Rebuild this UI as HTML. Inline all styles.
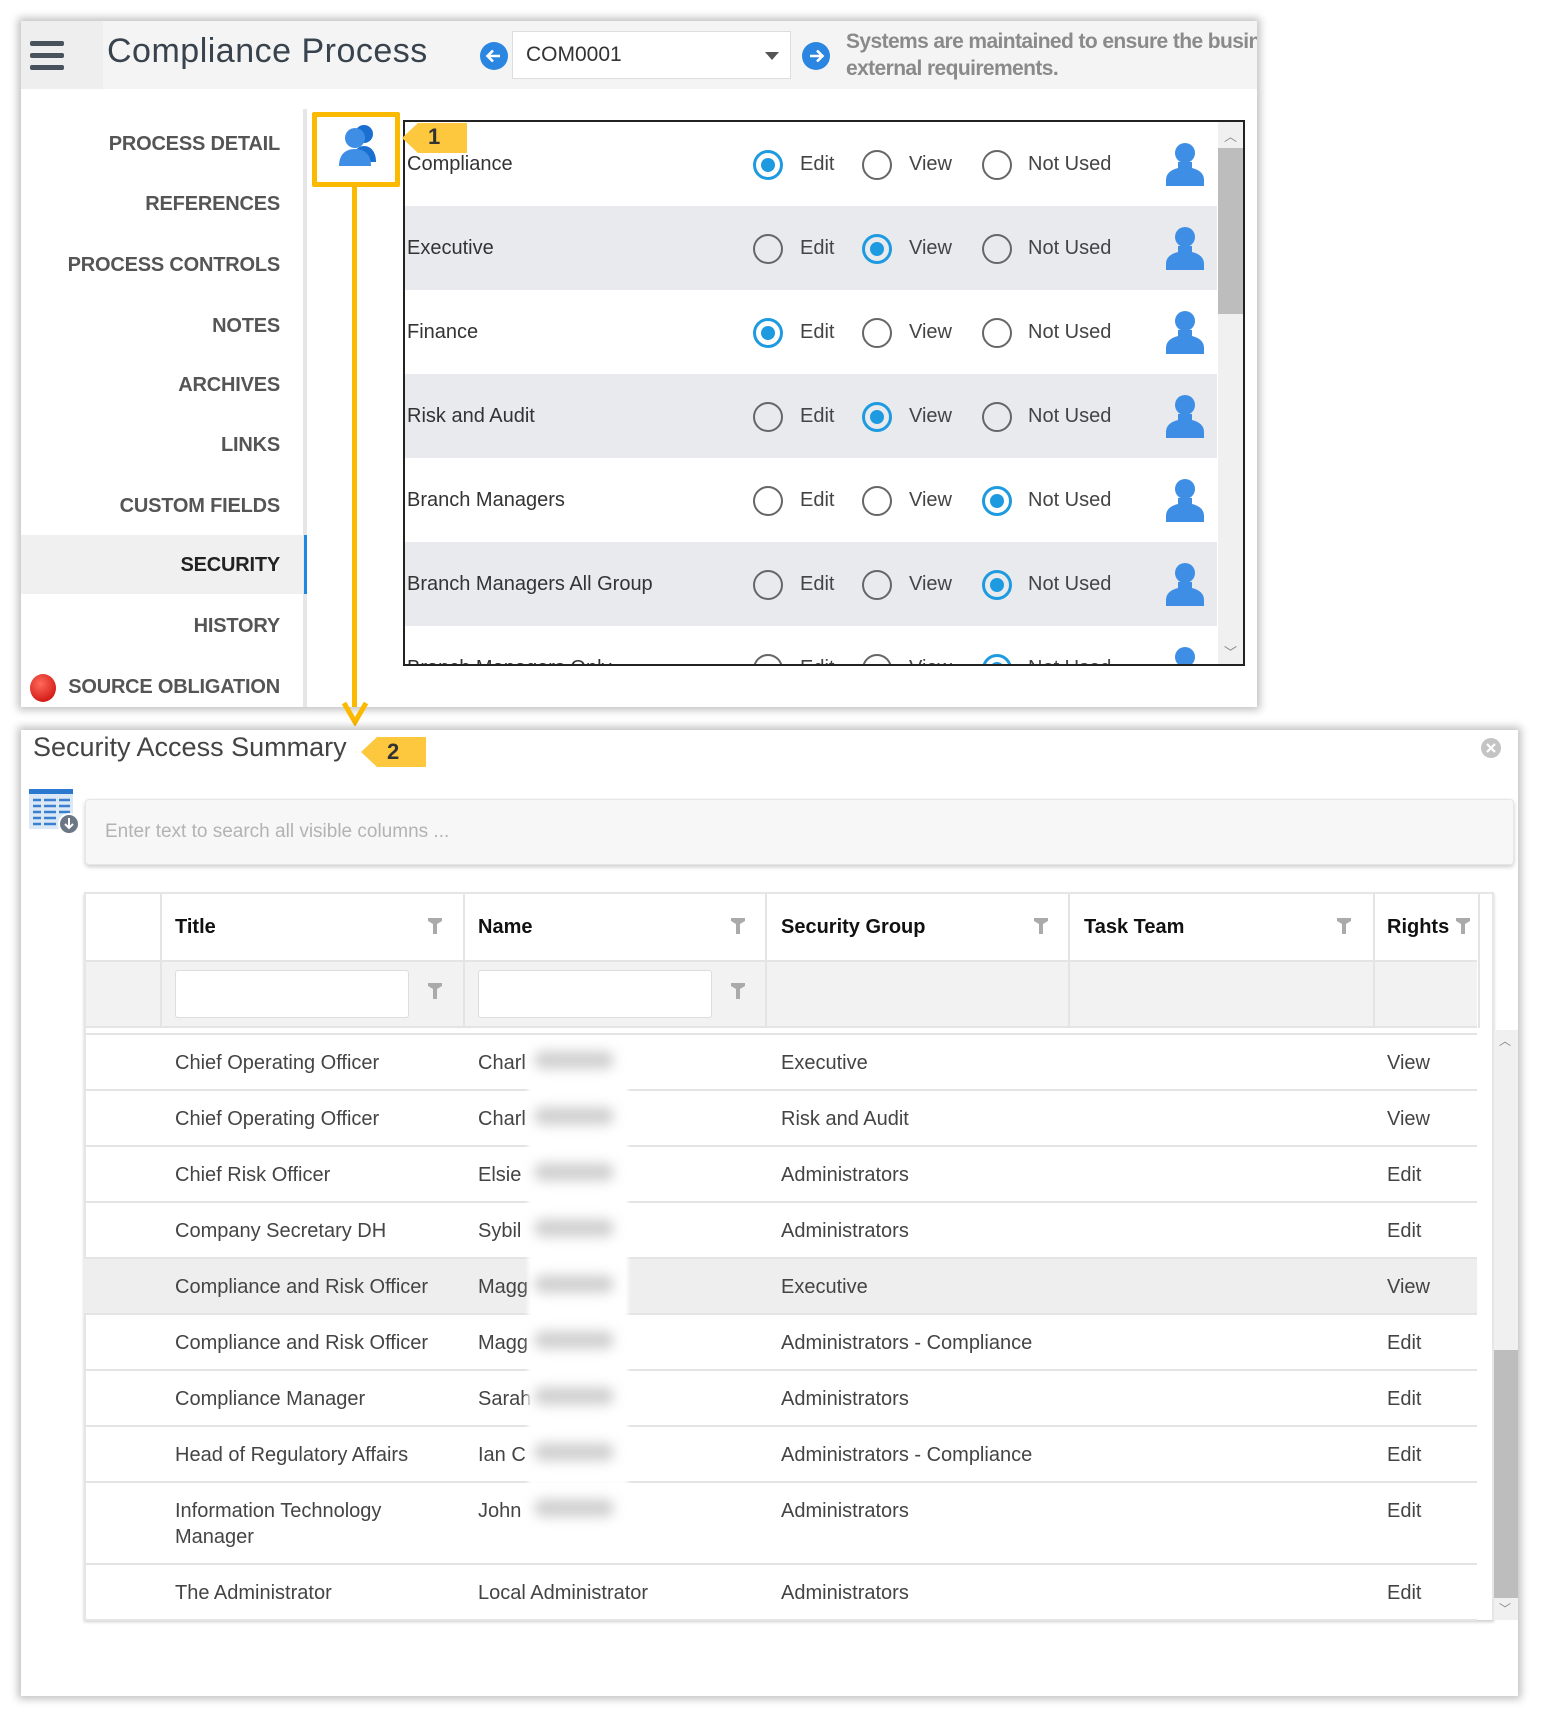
<!DOCTYPE html>
<html><head><meta charset="utf-8"><style>
*{box-sizing:border-box;margin:0;padding:0}
body{width:1542px;height:1720px;background:#fff;position:relative;overflow:hidden;font-family:"Liberation Sans",sans-serif;color:#444}
.abs{position:absolute}
.panel1{left:21px;top:21px;width:1236px;height:686px;background:#fff;box-shadow:0 0 8px 3px rgba(0,0,0,.25)}
.panel2{left:21px;top:730px;width:1497px;height:966px;background:#fff;box-shadow:0 0 8px 3px rgba(0,0,0,.25)}
.nav{position:absolute;right:0;width:290px;text-align:right;font-size:20px;color:#555;font-weight:bold;letter-spacing:-.2px}
.row{position:absolute;left:406px;width:812px;height:84px}
.rl{position:absolute;left:2px;top:31px;font-size:20px;color:#333}
.rad{position:absolute;width:30px;height:30px;border-radius:50%;border:2px solid #666;top:27px}
.rad.on{border:3px solid #1e9be0}
.rad.on::after{content:"";position:absolute;left:5px;top:5px;width:14px;height:14px;border-radius:50%;background:#1e9be0}
.lab{position:absolute;top:31px;font-size:20px;color:#444}
.cell{position:absolute;font-size:20px;color:#444}
.fil{position:absolute;width:14px;height:16px}
.gr{position:absolute;left:84px;width:1393px;height:56px;border-bottom:2px solid #e4e4e4}
</style></head><body>

<div class="abs panel1">
  <div class="abs" style="left:0;top:0;width:1236px;height:68px;background:#f4f4f4"></div>
  <div class="abs" style="left:0;top:0;width:82px;height:68px;background:#eeeeee"></div>
  <div class="abs" style="left:9px;top:20px;width:34px;height:5px;background:#48525c;border-radius:2px"></div>
  <div class="abs" style="left:9px;top:32px;width:34px;height:5px;background:#48525c;border-radius:2px"></div>
  <div class="abs" style="left:9px;top:44px;width:34px;height:5px;background:#48525c;border-radius:2px"></div>
  <div class="abs" style="left:86px;top:11px;font-size:34px;color:#38434e;letter-spacing:.5px">Compliance Process</div>
  <svg class="abs" style="left:458px;top:20px" width="30" height="30" viewBox="0 0 30 30"><circle cx="15" cy="15" r="14" fill="#2a86e0"/><path d="M21 15H9M14 9.5L8.5 15 14 20.5" stroke="#fff" stroke-width="2.6" fill="none"/></svg>
  <div class="abs" style="left:491px;top:10px;width:279px;height:48px;background:#fff;border:1px solid #ddd"></div>
  <div class="abs" style="left:505px;top:22px;font-size:21px;color:#333">COM0001</div>
  <div class="abs" style="left:744px;top:31px;border-left:7px solid transparent;border-right:7px solid transparent;border-top:8px solid #555"></div>
  <svg class="abs" style="left:780px;top:20px" width="30" height="30" viewBox="0 0 30 30"><circle cx="15" cy="15" r="14" fill="#2a86e0"/><path d="M9 15H21M16 9.5L21.5 15 16 20.5" stroke="#fff" stroke-width="2.6" fill="none"/></svg>
  <div class="abs" style="left:825px;top:7px;font-size:21px;color:#8a8a8a;font-weight:bold;line-height:27px;white-space:nowrap;letter-spacing:-.6px;width:411px;overflow:hidden">Systems are maintained to ensure the business<br>external requirements.</div>

  <div class="abs" style="left:0;top:514px;width:283px;height:59px;background:#f0f0f0"></div>
  <div class="abs" style="left:282px;top:88px;width:4px;height:598px;background:#e6e6e6"></div>
  <div class="abs" style="left:283px;top:514px;width:3px;height:59px;background:#1e88e5"></div>
  <div style="position:absolute;left:0;top:0;width:259px;height:686px">
  <div class="nav" style="top:112px">PROCESS DETAIL</div>
  <div class="nav" style="top:172px">REFERENCES</div>
  <div class="nav" style="top:233px">PROCESS CONTROLS</div>
  <div class="nav" style="top:294px">NOTES</div>
  <div class="nav" style="top:353px">ARCHIVES</div>
  <div class="nav" style="top:413px">LINKS</div>
  <div class="nav" style="top:474px">CUSTOM FIELDS</div>
  <div class="nav" style="top:533px;color:#222">SECURITY</div>
  <div class="nav" style="top:594px">HISTORY</div>
  <div class="nav" style="top:655px">SOURCE OBLIGATION</div>
  </div>
  <div class="abs" style="left:9px;top:653px;width:26px;height:28px;border-radius:50%;background:radial-gradient(circle at 40% 35%,#ff6a5a,#c40000)"></div>
</div>

<!-- security table -->
<div class="abs" style="left:403px;top:120px;width:842px;height:546px;border:2px solid #222;background:#fff"></div>
<div class="abs" style="left:405px;top:122px;width:813px;height:542px;overflow:hidden">
  <div class="row" style="left:0;top:0;background:#fff"><div class="rl">Compliance</div></div>
  <div class="row" style="left:0;top:84px;background:#e8eaee"><div class="rl">Executive</div></div>
  <div class="row" style="left:0;top:168px;background:#fff"><div class="rl">Finance</div></div>
  <div class="row" style="left:0;top:252px;background:#e8eaee"><div class="rl">Risk and Audit</div></div>
  <div class="row" style="left:0;top:336px;background:#fff"><div class="rl">Branch Managers</div></div>
  <div class="row" style="left:0;top:420px;background:#e8eaee"><div class="rl">Branch Managers All Group</div></div>
  <div class="row" style="left:0;top:504px;background:#fff"><div class="rl">Branch Managers Only</div></div>
</div>
<div id="rads"></div>
<div class="abs" style="left:1218px;top:122px;width:25px;height:542px;background:#f0f0f0"></div>
<div class="abs" style="left:1218px;top:148px;width:25px;height:166px;background:#bdbdbd"></div>
<div class="abs" style="left:1224px;top:126px;font-size:13px;color:#888">︿</div>
<div class="abs" style="left:1224px;top:642px;font-size:13px;color:#888">﹀</div>

<!-- yellow box & arrow -->
<div class="abs" style="left:312px;top:112px;width:88px;height:75px;border:5px solid #fbb900;border-radius:2px;background:#fff"></div>
<svg class="abs" style="left:333px;top:120px" width="52" height="52" viewBox="0 0 52 52">
<circle cx="31" cy="14" r="9" fill="#1b6fd0"/><path d="M20 42c0-10 4-16 11-16s12 6 12 16z" fill="#1b6fd0"/>
<circle cx="22" cy="18" r="10" fill="#3f8ee6"/><path d="M6 46c0-11 6-17 16-17s16 6 16 17z" fill="#3f8ee6"/></svg>
<div class="abs" style="left:352px;top:187px;width:5px;height:520px;background:#fbb900"></div>
<svg class="abs" style="left:341px;top:700px" width="28" height="26"><path d="M3 3L14 22 25 3" stroke="#fbb900" stroke-width="5" fill="none"/></svg>
<div class="abs" style="left:418px;top:123px;width:49px;height:30px;background:#fdc73e"></div>
<div class="abs" style="left:402px;top:123px;border-top:15px solid transparent;border-bottom:15px solid transparent;border-right:16px solid #fdc73e"></div>
<div class="abs" style="left:428px;top:124px;font-size:22px;font-weight:bold;color:#333">1</div>

<!-- panel 2 -->
<div class="abs panel2"></div>
<div class="abs" style="left:33px;top:732px;font-size:27px;color:#444">Security Access Summary</div>
<div class="abs" style="left:377px;top:737px;width:49px;height:30px;background:#fdc73e"></div>
<div class="abs" style="left:361px;top:737px;border-top:15px solid transparent;border-bottom:15px solid transparent;border-right:16px solid #fdc73e"></div>
<div class="abs" style="left:387px;top:739px;font-size:22px;font-weight:bold;color:#333">2</div>
<svg class="abs" style="left:1480px;top:737px" width="22" height="22"><circle cx="11" cy="11" r="10" fill="#c4c4c4"/><path d="M7 7L15 15M15 7L7 15" stroke="#fff" stroke-width="2.2"/></svg>
<svg class="abs" style="left:28px;top:788px" width="52" height="48" viewBox="0 0 52 48">
<rect x="1" y="1" width="44" height="40" fill="#dbe8f6"/><rect x="1" y="1" width="44" height="5" fill="#2a78d0"/>
<g stroke="#3a7fd0" stroke-width="2.5"><path d="M5 12h8M16 12h12M31 12h11M5 18h8M16 18h12M31 18h11M5 24h8M16 24h12M31 24h11M5 30h8M16 30h12M5 36h8M16 36h12"/></g>
<circle cx="41" cy="36" r="10" fill="#6b7784" stroke="#fff" stroke-width="2"/><path d="M41 30v10M37 36l4 4 4-4" stroke="#fff" stroke-width="2" fill="none"/></svg>
<div class="abs" style="left:85px;top:799px;width:1429px;height:66px;background:#f7f7f7;border:1px solid #e6e6e6;border-radius:4px;box-shadow:0 2px 4px rgba(0,0,0,.2)"></div>
<div class="abs" style="left:105px;top:821px;font-size:19px;color:#b3b3b3">Enter text to search all visible columns ...</div>

<!-- grid -->
<div class="abs" style="left:84px;top:892px;width:1410px;height:728px;border:2px solid #e6e6e6;border-bottom:none;box-shadow:0 2px 3px rgba(0,0,0,.2)"></div>
<div class="abs" style="left:86px;top:960px;width:1391px;height:68px;background:#f2f2f2;border-top:2px solid #e4e4e4;border-bottom:2px solid #e4e4e4"></div>
<div class="abs" style="left:160px;top:894px;width:2px;height:134px;background:#e4e4e4"></div>
<div class="abs" style="left:463px;top:894px;width:2px;height:134px;background:#e4e4e4"></div>
<div class="abs" style="left:765px;top:894px;width:2px;height:134px;background:#e4e4e4"></div>
<div class="abs" style="left:1068px;top:894px;width:2px;height:134px;background:#e4e4e4"></div>
<div class="abs" style="left:1373px;top:894px;width:2px;height:134px;background:#e4e4e4"></div>
<div class="abs" style="left:1478px;top:894px;width:2px;height:134px;background:#e4e4e4"></div>
<div class="abs" style="left:86px;top:1033px;width:1391px;height:2px;background:#e4e4e4"></div>
<div class="abs" style="left:175px;top:894px;font-weight:bold;font-size:20px;color:#111;line-height:66px">Title</div>
<div class="abs" style="left:478px;top:894px;font-weight:bold;font-size:20px;color:#111;line-height:66px">Name</div>
<div class="abs" style="left:781px;top:894px;font-weight:bold;font-size:20px;color:#111;line-height:66px">Security Group</div>
<div class="abs" style="left:1084px;top:894px;font-weight:bold;font-size:20px;color:#111;line-height:66px">Task Team</div>
<div class="abs" style="left:1387px;top:894px;font-weight:bold;font-size:20px;color:#111;line-height:66px">Rights</div>
<div class="abs" style="left:175px;top:970px;width:234px;height:48px;background:#fff;border:1px solid #ddd;border-radius:3px"></div>
<div class="abs" style="left:478px;top:970px;width:234px;height:48px;background:#fff;border:1px solid #ddd;border-radius:3px"></div>
<svg width="0" height="0" style="position:absolute"><defs><symbol id="f" viewBox="0 0 14 16"><path d="M0 0h14v3L9 6v10H5V6L0 3z" fill="#aaa"/></symbol></defs></svg>
<svg class="fil" style="left:428px;top:918px"><use href="#f"/></svg>
<svg class="fil" style="left:731px;top:918px"><use href="#f"/></svg>
<svg class="fil" style="left:1034px;top:918px"><use href="#f"/></svg>
<svg class="fil" style="left:1337px;top:918px"><use href="#f"/></svg>
<svg class="fil" style="left:1456px;top:918px"><use href="#f"/></svg>
<svg class="fil" style="left:428px;top:983px"><use href="#f"/></svg>
<svg class="fil" style="left:731px;top:983px"><use href="#f"/></svg>

<div id="rows"></div>

<div class="abs" style="left:1494px;top:1030px;width:24px;height:590px;background:#f0f0f0"></div>
<div class="abs" style="left:1494px;top:1350px;width:24px;height:248px;background:#bdbdbd"></div>
<div class="abs" style="left:1499px;top:1032px;font-size:12px;color:#888">︿</div>
<div class="abs" style="left:1499px;top:1600px;font-size:12px;color:#888">﹀</div>

<script>
var rads=[[1,0,0],[0,1,0],[1,0,0],[0,1,0],[0,0,1],[0,0,1],[0,0,1]];
var h='';
rads.forEach(function(r,i){
 var y=122+i*84;
 var clip=i==6?'clip-path:inset(0 0 '+(84-(664-y))+'px 0);':'';
 h+='<div class="abs" style="left:0;top:'+y+'px;width:1542px;height:84px;'+clip+'">';
 [753,862,982].forEach(function(x,j){h+='<div class="rad'+(r[j]?' on':'')+'" style="left:'+x+'px;top:28px"></div>';});
 h+='<div class="lab" style="left:800px">Edit</div><div class="lab" style="left:909px">View</div><div class="lab" style="left:1028px">Not Used</div>';
 h+='<svg style="position:absolute;left:1162px;top:20px" width="46" height="46" viewBox="0 0 46 46"><circle cx="23" cy="11" r="10" fill="#3f8ee6"/><path d="M16 20h14v6c8 2 12 6 12 12v6H4v-6c0-6 4-10 12-12z" fill="#3f8ee6"/></svg>';
 h+='</div>';
});
document.getElementById('rads').innerHTML=h;
var rows=[["Chief Operating Officer","Charl","Executive","View"],["Chief Operating Officer","Charl","Risk and Audit","View"],["Chief Risk Officer","Elsie","Administrators","Edit"],["Company Secretary DH","Sybil","Administrators","Edit"],["Compliance and Risk Officer","Magg","Executive","View"],["Compliance and Risk Officer","Magg","Administrators - Compliance","Edit"],["Compliance Manager","Sarah","Administrators","Edit"],["Head of Regulatory Affairs","Ian C","Administrators - Compliance","Edit"],["Information Technology<br>Manager","John","Administrators","Edit"],["The Administrator","Local Administrator","Administrators","Edit"]];
var g='',y=1035;
rows.forEach(function(r,i){
 var hh=i==8?82:56;
 g+='<div class="gr" style="top:'+y+'px;height:'+hh+'px;'+(i==4?'background:#eeeeee;':'')+'"></div>';
 g+='<div class="cell" style="left:175px;top:'+(y+15)+'px;line-height:26px">'+r[0]+'</div>';
 g+='<div class="cell" style="left:478px;top:'+(y+15)+'px;line-height:26px">'+r[1]+'</div>';
 g+='<div class="cell" style="left:781px;top:'+(y+15)+'px;line-height:26px">'+r[2]+'</div>';
 g+='<div class="cell" style="left:1387px;top:'+(y+15)+'px;line-height:26px">'+r[3]+'</div>';
 y+=hh;
});
g+='<div class="abs" style="left:528px;top:1045px;width:100px;height:440px;background:#fff;filter:blur(2px)"></div>';
[1049,1105,1161,1217,1273,1329,1385,1441,1497].forEach(function(t){g+='<div class="abs" style="left:534px;top:'+(t+2)+'px;width:80px;height:18px;background:#d0d0d0;border-radius:9px;filter:blur(6px)"></div>';});
document.getElementById('rows').innerHTML=g;
</script>
</body></html>
